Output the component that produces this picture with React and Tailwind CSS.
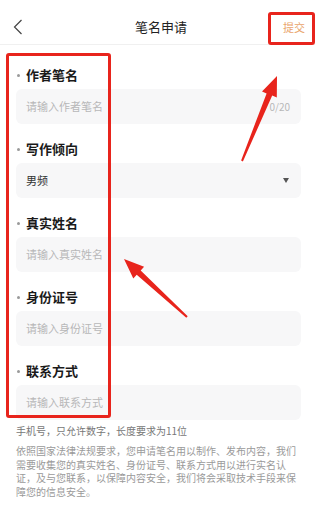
import { useState } from "react";

const fields = [
  { label: "作者笔名", placeholder: "请输入作者笔名", counter: "0/20" },
  { label: "写作倾向", value: "男频", select: true },
  { label: "真实姓名", placeholder: "请输入真实姓名" },
  { label: "身份证号", placeholder: "请输入身份证号" },
  { label: "联系方式", placeholder: "请输入联系方式" },
];

const Field = ({ field }) => (
  <div className="flex flex-col">
    <div className="flex items-center h-4">
      <span className="w-[3px] h-[3px] rounded-full bg-[#9a9a9a] ml-[1px] mr-[6px]" />
      <span className="text-[13px] font-bold text-[#1a1a1a] leading-4">{field.label}</span>
    </div>
    <div className="mt-[6px] h-[35px] rounded-[6px] bg-[#f7f7f8] flex items-center pl-[10px] pr-[10px]">
      {field.select ? (
        <>
          <span className="text-[11px] text-[#333] flex-1">{field.value}</span>
          <span className="w-0 h-0 border-l-[3.5px] border-r-[3.5px] border-t-[5px] border-l-transparent border-r-transparent border-t-[#555] mr-[2px]" />
        </>
      ) : (
        <>
          <span className="text-[11px] text-[#b8b8b8] flex-1">{field.placeholder}</span>
          {field.counter && <span className="text-[10px] text-[#b8b8b8] mr-[1px]">{field.counter}</span>}
        </>
      )}
    </div>
  </div>
);

export default function App() {
  const [tab] = useState(0);

  return (
    <div
      className="relative w-[315px] h-[514px] bg-white overflow-hidden"
      style={{ fontFamily: '"Noto Sans CJK SC", "Noto Sans", sans-serif' }}
      data-tab={tab}
    >
      {/* 顶部栏 */}
      <div className="h-[45px] border-b border-[#f0f0f0] flex items-center pt-[10px] px-3">
        <svg width="10" height="16" viewBox="0 0 10 16" className="ml-[1px]">
          <path d="M8.5 1 L1.5 8 L8.5 15" fill="none" stroke="#444" strokeWidth="1.2" />
        </svg>
        <div className="flex-1 text-center text-[13px] text-[#222] ml-[16px]">笔名申请</div>
        <span className="text-[11px] text-[#e9a36a] mr-[-2px]">提交</span>
      </div>

      {/* 表单 */}
      <div className="flex flex-col gap-[17px] pl-4 pr-[14px] pt-[22px]">
        {fields.map((f) => (
          <Field key={f.label} field={f} />
        ))}
      </div>

      {/* 说明 */}
      <div className="px-4 mt-[4px]">
        <p className="text-[10px] leading-[14px] text-[#777]">手机号，只允许数字，长度要求为11位</p>
        <p className="mt-[6px] text-[10px] leading-[13.5px] text-[#9a9a9a]">
          依照国家法律法规要求，您申请笔名用以制作、发布内容，我们需要收集您的真实姓名、身份证号、联系方式用以进行实名认证，及与您联系，以保障内容安全，我们将会采取技术手段来保障您的信息安全。
        </p>
      </div>

      {/* 标注 */}
      <div className="absolute left-[268px] top-[12px] w-[47px] h-[33px] border-[3px] border-[#e8241c] rounded-[3px]" />
      <div className="absolute left-[6px] top-[53px] w-[105px] h-[365px] border-[3px] border-[#e8241c] rounded-[3px]" />
      <svg className="absolute inset-0 pointer-events-none" width="315" height="514" viewBox="0 0 315 514">
        <polygon
          points="242.9,161.4 272.2,95.6 276.8,97.5 277,76 262,91.5 266.6,93.4 241.1,160.6"
          fill="#e8241c"
        />
        <polygon
          points="187.7,316.3 140.7,270.4 144.1,266.7 124,259 133.3,278.5 136.7,274.8 186.3,317.7"
          fill="#e8241c"
        />
      </svg>
    </div>
  );
}
